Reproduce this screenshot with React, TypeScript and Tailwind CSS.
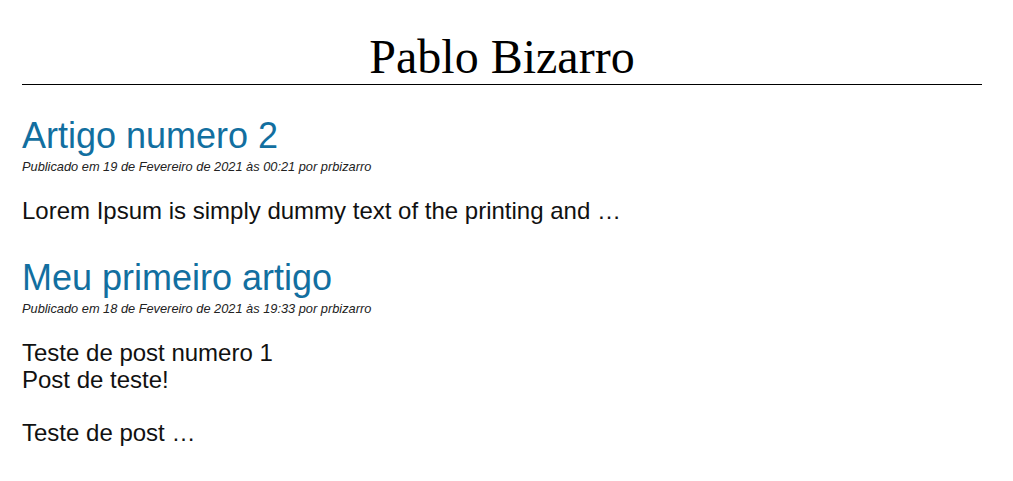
const posts = [
  {
    title: "Artigo numero 2",
    meta: "Publicado em 19 de Fevereiro de 2021 às 00:21 por prbizarro",
    body: [["Lorem Ipsum is simply dummy text of the printing and …"]],
  },
  {
    title: "Meu primeiro artigo",
    meta: "Publicado em 18 de Fevereiro de 2021 às 19:33 por prbizarro",
    body: [["Teste de post numero 1", "Post de teste!"], ["Teste de post …"]],
  },
];

export default function App() {
  return (
    <div className="min-h-[481px] bg-white text-[#111] font-['Liberation_Sans',Arial,sans-serif]">
      <div className="ml-[22px] w-[960px]">
        <header className="pt-[33px] pb-[3px] border-b border-black">
          <h1 className="text-center font-['Liberation_Serif','Times_New_Roman',serif] text-[48px] leading-[48px] text-black">
            Pablo Bizarro
          </h1>
        </header>

        <main className="flex flex-col gap-[36px] pt-[33px]">
          {posts.map((post) => (
            <article key={post.title}>
              <h2 className="text-[36px] leading-[36px] text-[#126fa0]">{post.title}</h2>
              <div className="mt-[6px] text-[12.8px] leading-[14px] italic text-[#222]">{post.meta}</div>
              <div className="mt-[23px] flex flex-col gap-[26px]">
                {post.body.map((lines, i) => (
                  <p key={i} className="text-[24px] leading-[27px]">
                    {lines.map((line, j) => (
                      <span key={j} className="block">
                        {line}
                      </span>
                    ))}
                  </p>
                ))}
              </div>
            </article>
          ))}
        </main>
      </div>
    </div>
  );
}
